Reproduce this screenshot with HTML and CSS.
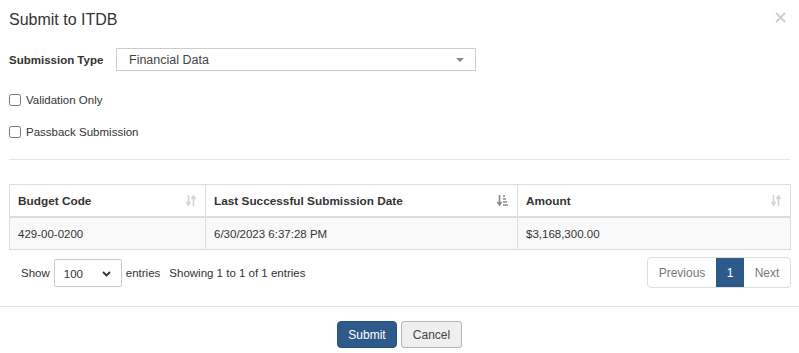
FILE: index.html
```html
<!DOCTYPE html>
<html lang="en">
<head>
    <meta charset="UTF-8">
    <meta name="viewport" content="width=device-width, initial-scale=1.0">
    <title>Submit to ITDB</title>
    <link rel="stylesheet" href="styles.css">
</head>
<body>
    <div class="modal">
        <div class="modal-header">
            <h4 class="modal-title">Submit to ITDB</h4>
            <span class="close">
                <svg width="11" height="11" viewBox="0 0 11 11"><path d="M1 1L10 10M10 1L1 10" stroke="#cfcfcf" stroke-width="2"/></svg>
            </span>
        </div>

        <div class="modal-body">
            <div class="form-row">
                <label class="field-label">Submission Type</label>
                <div class="select-box">
                    <span>Financial Data</span>
                    <span class="caret"></span>
                </div>
            </div>

            <label class="check-row"><input type="checkbox"> Validation Only</label>
            <label class="check-row"><input type="checkbox"> Passback Submission</label>

            <div class="divider"></div>

            <table class="data-table">
                <thead>
                    <tr>
                        <th class="col-code">Budget Code
                            <svg class="sort" width="10" height="11" viewBox="0 0 10 11"><path d="M2.5 0V9M0.5 7L2.5 10L4.5 7M7.5 11V2M5.5 4L7.5 1L9.5 4" stroke="#d4d4d4" stroke-width="1.6" fill="none"/></svg>
                        </th>
                        <th class="col-date">Last Successful Submission Date
                            <svg class="sort" width="11" height="11" viewBox="0 0 11 11"><path d="M2.5 0V9M0.5 7L2.5 10L4.5 7" stroke="#8a8a8a" stroke-width="1.6" fill="none"/><path d="M6 1H8M6 4H9M6 7H10M6 10H11" stroke="#8a8a8a" stroke-width="1.4"/></svg>
                        </th>
                        <th class="col-amount">Amount
                            <svg class="sort" width="10" height="11" viewBox="0 0 10 11"><path d="M2.5 0V9M0.5 7L2.5 10L4.5 7M7.5 11V2M5.5 4L7.5 1L9.5 4" stroke="#d4d4d4" stroke-width="1.6" fill="none"/></svg>
                        </th>
                    </tr>
                </thead>
                <tbody>
                    <tr>
                        <td>429-00-0200</td>
                        <td>6/30/2023 6:37:28 PM</td>
                        <td>$3,168,300.00</td>
                    </tr>
                </tbody>
            </table>

            <div class="table-footer">
                <div class="length">
                    Show
                    <div class="length-select">
                        <span>100</span>
                        <svg width="9" height="6" viewBox="0 0 9 6"><path d="M1 1L4.5 4.5L8 1" stroke="#333" stroke-width="1.8" fill="none"/></svg>
                    </div>
                    entries
                </div>
                <div class="info">Showing 1 to 1 of 1 entries</div>
                <ul class="pagination">
                    <li class="page-prev">Previous</li>
                    <li class="page-num">1</li>
                    <li class="page-next">Next</li>
                </ul>
            </div>
        </div>

        <div class="modal-footer">
            <button class="btn btn-primary">Submit</button>
            <button class="btn btn-default">Cancel</button>
        </div>
    </div>
</body>
</html>
```

FILE: styles.css
```css
body {
    margin: 0;
    font-family: "Liberation Sans", Arial, sans-serif;
    font-size: 11.5px;
    color: #333;
    background-color: #fff;
}
.modal {
    width: 799px;
}
.modal-header {
    display: flex;
    justify-content: space-between;
    align-items: flex-start;
    height: 40px;
    padding: 0 13px 0 9px;
}
.modal-title {
    margin: 0;
    padding-top: 9px;
    font-size: 16px;
    font-weight: normal;
    line-height: 22px;
}
.close {
    padding-top: 12px;
}
.modal-body {
    padding: 8px 8px 0 9px;
}
.form-row {
    display: flex;
    align-items: center;
    height: 23px;
}
.field-label {
    width: 107px;
    font-weight: bold;
}
.select-box {
    display: flex;
    justify-content: space-between;
    align-items: center;
    box-sizing: border-box;
    width: 360px;
    height: 23px;
    padding: 0 11px 0 12px;
    border: 1px solid #ccc;
    font-size: 12.5px;
    color: #444;
}
.caret {
    width: 0;
    height: 0;
    border-left: 4px solid transparent;
    border-right: 4px solid transparent;
    border-top: 4px solid #888;
}
.check-row {
    display: flex;
    align-items: center;
    height: 32px;
    gap: 5px;
}
.check-row:first-of-type {
    margin-top: 13px;
}
.check-row input {
    width: 12px;
    height: 12px;
    margin: 0;
}
.divider {
    height: 1px;
    margin: 11px 1px 24px 0;
    background-color: #e5e5e5;
}
.data-table {
    width: 782px;
    border-collapse: collapse;
    table-layout: fixed;
}
.data-table th,
.data-table td {
    border: 1px solid #ddd;
    padding: 0 8px;
    height: 31px;
    text-align: left;
}
.data-table th {
    position: relative;
    font-size: 11.8px;
    font-weight: bold;
    border-bottom-width: 2px;
}
.data-table td {
    background-color: #f9f9f9;
}
.col-code {
    width: 179px;
}
.col-date {
    width: 295px;
}
.sort {
    position: absolute;
    right: 9px;
    top: 10px;
}
.table-footer {
    display: flex;
    align-items: center;
    margin-top: 7px;
    padding-left: 12px;
}
.length {
    display: flex;
    align-items: center;
    gap: 4px;
}
.length-select {
    display: flex;
    justify-content: space-between;
    align-items: center;
    box-sizing: border-box;
    width: 68px;
    height: 28px;
    padding: 2px 10px 0 9px;
    border: 1px solid #ccc;
    border-radius: 2px;
}
.info {
    margin-left: 9px;
}
.pagination {
    display: flex;
    margin: 0 0 0 auto;
    padding: 0;
    list-style: none;
    border: 1px solid #ddd;
    border-radius: 4px;
    height: 29px;
}
.pagination li {
    display: flex;
    align-items: center;
    justify-content: center;
    font-size: 12px;
    color: #777;
}
.page-prev {
    width: 68px;
}
.page-next {
    width: 46px;
}
.pagination .page-num {
    width: 28px;
    background-color: #2d5a8a;
    color: #fff;
}
.modal-footer {
    display: flex;
    justify-content: center;
    gap: 4px;
    margin-top: 18px;
    padding-top: 14px;
    border-top: 1px solid #e5e5e5;
}
.btn {
    width: 60px;
    height: 27px;
    padding: 0;
    font-family: "Liberation Sans", Arial, sans-serif;
    font-size: 12px;
    border-radius: 4px;
}
.btn-primary {
    background-color: #2d5a8a;
    border: 1px solid #26507c;
    color: #fff;
}
.btn-default {
    width: 61px;
    background-color: #efefef;
    border: 1px solid #b5b5b5;
    color: #444;
    border-radius: 3px;
}
```
